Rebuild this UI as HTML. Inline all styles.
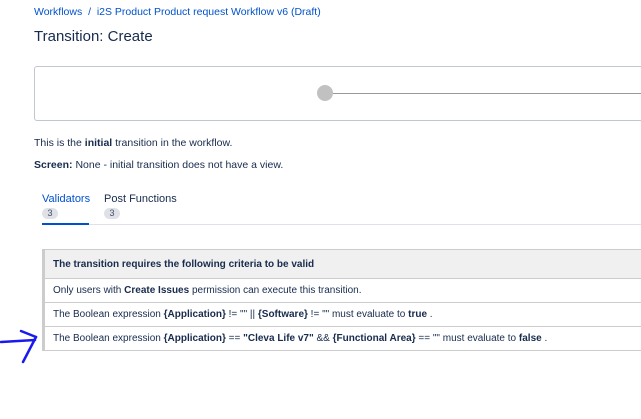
<!DOCTYPE html>
<html><head><style>
body{margin:0;width:641px;height:419px;background:#fff;font-family:"Liberation Sans",sans-serif;color:#172b4d;position:relative;overflow:hidden}
.a{position:absolute;white-space:nowrap}
.bc{left:34px;top:6px;font-size:10.5px;color:#0052cc}
.t{left:34px;top:28px;font-size:15px}
.box{position:absolute;left:34px;top:66px;width:620px;height:53px;border:1px solid #c1c7d0;border-radius:3px}
.p{font-size:10.5px;left:34px}
.tab{font-size:11px;top:193px}
.bd{position:absolute;top:208px;width:16px;height:11px;border-radius:6px;background:#dfe1e6;font-size:9px;text-align:center;line-height:11px;color:#42526e}
table{position:absolute;left:42px;top:249px;width:610px;border-collapse:collapse;font-size:10px;border-left:3px solid #ccc}
td{border:1px solid #ccc;border-left:none;padding:0 8px;height:23px}
tr.h td{background:#f0f0f0;height:28px;font-weight:bold}
b{font-weight:bold}
</style></head><body>
<div class="a bc">Workflows &nbsp;/&nbsp; i2S Product Product request Workflow v6 (Draft)</div>
<div class="a t">Transition: Create</div>
<div class="box"></div>
<div style="position:absolute;left:317px;top:85px;width:16px;height:16px;border-radius:50%;background:#c1c1c1"></div>
<div style="position:absolute;left:333px;top:93px;width:308px;height:1px;background:#999"></div>
<div class="a p" style="top:137px">This is the <b>initial</b> transition in the workflow.</div>
<div class="a p" style="top:159px"><b>Screen:</b> None - initial transition does not have a view.</div>
<div class="a tab" style="left:42px;color:#0052cc">Validators</div>
<div class="a tab" style="left:104px">Post Functions</div>
<div class="bd" style="left:42px">3</div>
<div class="bd" style="left:104px">3</div>
<div style="position:absolute;left:42px;top:224px;width:600px;height:1px;background:#dfe1e6"></div>
<div style="position:absolute;left:42px;top:223px;width:47px;height:2px;background:#0052cc"></div>
<table>
<tr class="h"><td>The transition requires the following criteria to be valid</td></tr>
<tr><td>Only users with <b>Create Issues</b> permission can execute this transition.</td></tr>
<tr><td>The Boolean expression <b>{Application}</b> != "" || <b>{Software}</b> != "" must evaluate to <b>true</b> .</td></tr>
<tr><td>The Boolean expression <b>{Application}</b> == <b>"Cleva Life v7"</b> &amp;&amp; <b>{Functional Area}</b> == "" must evaluate to <b>false</b> .</td></tr>
</table>
<svg style="position:absolute;left:0;top:325px" width="45" height="45"><g fill="none" stroke="#1a1aee" stroke-width="2.5" stroke-linecap="round"><path d="M1 17 L35 15"/><path d="M21 6 L36 12"/><path d="M36 12 L23 37"/></g></svg>
</body></html>
